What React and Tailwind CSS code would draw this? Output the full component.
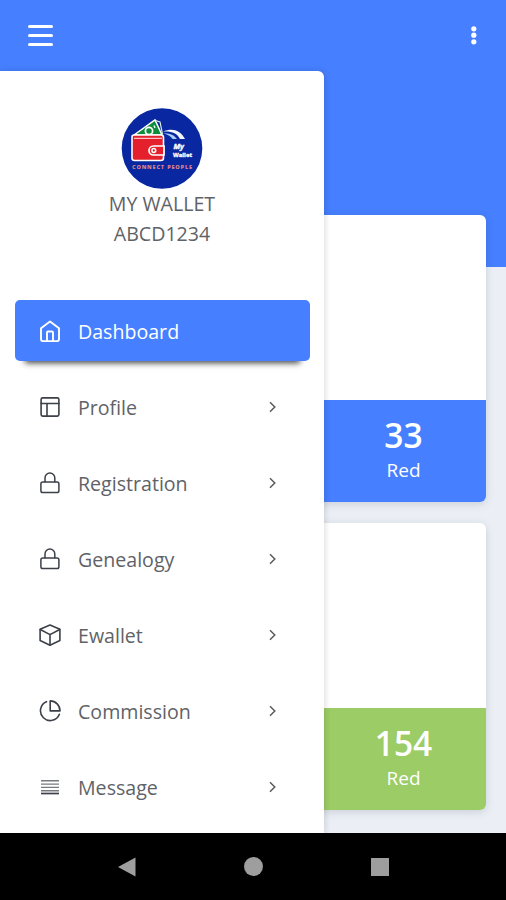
import React from 'react';

const MENU = [
  { name: 'Dashboard', icon: 'home', active: true },
  { name: 'Profile', icon: 'layout' },
  { name: 'Registration', icon: 'lock' },
  { name: 'Genealogy', icon: 'lock' },
  { name: 'Ewallet', icon: 'box' },
  { name: 'Commission', icon: 'pie' },
  { name: 'Message', icon: 'lines' },
];

const CARDS = [
  { value: 33, label: 'Red', bg: 'bg-[#467fff]' },
  { value: 154, label: 'Red', bg: 'bg-[#9ccc65]' },
];

const ICONS = {
  home: (
    <g strokeWidth="1.9">
      <path d="M2 8.2v11a2 2 0 0 0 2 2h14a2 2 0 0 0 2-2v-11L11 1.500z"/>
      <path d="M8 21v-8.500a1 1 0 0 1 1-1h4a1 1 0 0 1 1 1V21"/>
    </g>
  ),
  layout: (
    <g strokeWidth="1.6">
      <rect x="2.1" y="1.9" width="17.8" height="18.2" rx="1.6"/>
      <path d="M2.1 7.500h17.800M8 7.500v12.600"/>
    </g>
  ),
  lock: (
    <g strokeWidth="1.5">
      <rect x="1.9" y="10" width="18" height="10.600" rx="1.8"/>
      <path d="M6 9.800V6a4.900 4.900 0 0 1 9.800 0v3.800"/>
    </g>
  ),
  box: (
    <g strokeWidth="1.6">
      <path d="M11 1l9.900 4.300v11.200L11 21.200l-9.900-4.700V5.300z"/>
      <path d="M1.300 5.500L11 10.600l9.700-5.100M11 10.600v10.400"/>
    </g>
  ),
  pie: (
    <g strokeWidth="1.6">
      <path d="M7.500 1.700a9.800 9.800 0 1 0 12.900 12.600"/>
      <path d="M11.200.900v10h9.800a9.900 9.900 0 0 0-9.800-10z"/>
    </g>
  ),
  lines: (
    <g strokeWidth="1.4" strokeLinecap="butt">
      <path d="M2 4.800h18M2 8.100h18M2 11.400h18M2 14.700h18" opacity="0.7"/>
      <path d="M2 17.500h18" strokeWidth="1.700"/>
    </g>
  ),
};

function Icon({ name }) {
  return (
    <svg width="22" height="22" viewBox="0 0 22 22" fill="none" stroke="currentColor" strokeLinecap="round" strokeLinejoin="round">
      {ICONS[name]}
    </svg>
  );
}

function Logo() {
  return (
    <svg width="82" height="82" viewBox="0 0 82 82">
      <circle cx="41" cy="41.500" r="40.300" fill="#0827a0"/>
      {/* banknotes */}
      <path d="M13 28L34 13l7 15z" fill="#0c8f3a" stroke="#fff" strokeWidth="1.5"/>
      <path d="M34.500 13.500l4.500 1.500 2.500 12" fill="none" stroke="#d8f3dc" strokeWidth="1.200"/>
      <circle cx="28" cy="24" r="3.600" fill="#0c8f3a" stroke="#fff" strokeWidth="1.700"/>
      <path d="M33 18.500l1 2.500" stroke="#fff" strokeWidth="1.300"/>
      {/* wallet */}
      <path d="M11 30q0-2 2-2h27q2.500 0 2.500 2.500V51q0 2.500-2.500 2.500H13.500q-2.500 0-2.500-2.500z" fill="#e3202b" stroke="#fff" strokeWidth="1.600"/>
      <path d="M13 31.300h28" stroke="#fff" strokeWidth="0.900"/>
      <path d="M43 39v9H32.500a4.500 4.500 0 0 1 0-9z" fill="#e3202b" stroke="#fff" strokeWidth="1.700"/>
      <circle cx="32.800" cy="43.500" r="1.900" fill="none" stroke="#fff" strokeWidth="1.500"/>
      {/* swooshes */}
      <path d="M42 24.500c9-3.500 17-2 22 7.500h-5C56 26 51 24 42 24.500z" fill="#f1f6ff"/>
      <path d="M42 26.500c6-.500 11 1 14 5.500h-4.500C49.500 29 47 27.500 42 26.500z" fill="#a9cdf7"/>
      <g fill="#fff" stroke="#fff" strokeWidth="0.3" fontFamily="Open Sans, sans-serif" fontWeight="700">
        <text x="52.500" y="42" fontSize="6.200" fontStyle="italic" textLength="10.500" lengthAdjust="spacingAndGlyphs">My</text>
        <text x="52" y="50" fontSize="5.600" textLength="19" lengthAdjust="spacingAndGlyphs">Wallet</text>
      </g>
      <text x="11" y="61.800" fontSize="5.600" fill="#d97f8c" fontFamily="Open Sans, sans-serif" fontWeight="800" textLength="60">CONNECT PEOPLE</text>
    </svg>
  );
}

function MenuItem({ item }) {
  const look = item.active
    ? 'bg-[#467fff] text-white shadow-[0_12px_6px_-10px_rgba(0,0,0,0.75)]'
    : 'text-[#5f6368]';
  return (
    <li className={`flex h-[61px] items-center rounded-[5px] pr-[33px] pl-6 ${look}`}>
      <span className={item.active ? 'text-white' : 'text-[#3c4048]'}><Icon name={item.icon}/></span>
      <span className="ml-[17px] flex-1 pt-[3px] text-[19.6px] leading-7">{item.name}</span>
      {!item.active && (
        <svg width="9" height="14" viewBox="0 0 9 14" fill="none" stroke="#5a5a5a" strokeWidth="1.5">
          <path d="M2 2.200l4.800 4.800L2 11.800"/>
        </svg>
      )}
    </li>
  );
}

function Drawer() {
  return (
    <aside className="absolute top-[71px] bottom-0 left-0 w-[324px] overflow-hidden rounded-tr-[6px] bg-white shadow-[1px_0_6px_rgba(0,0,0,0.14)]">
      <div className="flex flex-col items-center pt-[36px] text-[19.6px] leading-[30px] text-[#5f6368]">
        <Logo/>
        <span>MY WALLET</span>
        <span>ABCD1234</span>
      </div>
      <ul className="mt-[51px] flex flex-col gap-[15px] pr-3.5 pl-[15px]">
        {MENU.map(item => <MenuItem key={item.name} item={item}/>)}
      </ul>
    </aside>
  );
}

function StatCard({ card }) {
  return (
    <div className="overflow-hidden rounded-[6px] bg-white shadow-[0_2px_8px_rgba(40,50,70,0.16)]">
      <div className="h-[185px]"/>
      <div className={`flex h-[102px] justify-end text-white ${card.bg}`}>
        <div className="flex w-[165px] flex-col items-center pt-3">
          <span className="text-[33.5px] leading-[46px] font-semibold">{card.value}</span>
          <span className="text-[19px] leading-6">{card.label}</span>
        </div>
      </div>
    </div>
  );
}

export default function App() {
  return (
    <div className="flex h-[900px] w-[506px] flex-col overflow-hidden bg-black font-['Open_Sans',sans-serif]">
      <main className="relative h-[833px] overflow-hidden bg-[#ebeff5]">
        <header className="flex h-[267px] items-start justify-between bg-[#467fff] pt-[25px] pr-[29px] pl-7">
          <div className="flex w-[25px] flex-col gap-[6px]">
            <span className="h-[3px] rounded-sm bg-white"/>
            <span className="h-[3px] rounded-sm bg-white"/>
            <span className="h-[3px] rounded-sm bg-white"/>
          </div>
          <svg width="6" height="20" viewBox="0 0 6 20" fill="#fff" className="mt-px">
            <circle cx="2.800" cy="2.800" r="2.600"/>
            <circle cx="2.800" cy="9.200" r="2.600"/>
            <circle cx="2.800" cy="15.800" r="2.600"/>
          </svg>
        </header>
        <section className="-mt-[52px] flex flex-col gap-[21px] px-5">
          {CARDS.map(card => <StatCard key={card.value} card={card}/>)}
        </section>
        <Drawer/>
      </main>
      {/* system navigation */}
      <nav className="flex h-[67px] items-center justify-between bg-black pr-[117px] pl-[118px]">
        <svg width="18" height="20" viewBox="0 0 18 20" fill="#9e9e9e"><path d="M0 10L17.500.500v19z"/></svg>
        <span className="size-[19px] rounded-full bg-[#9e9e9e]"/>
        <span className="size-[18px] bg-[#9e9e9e]"/>
      </nav>
    </div>
  );
}
